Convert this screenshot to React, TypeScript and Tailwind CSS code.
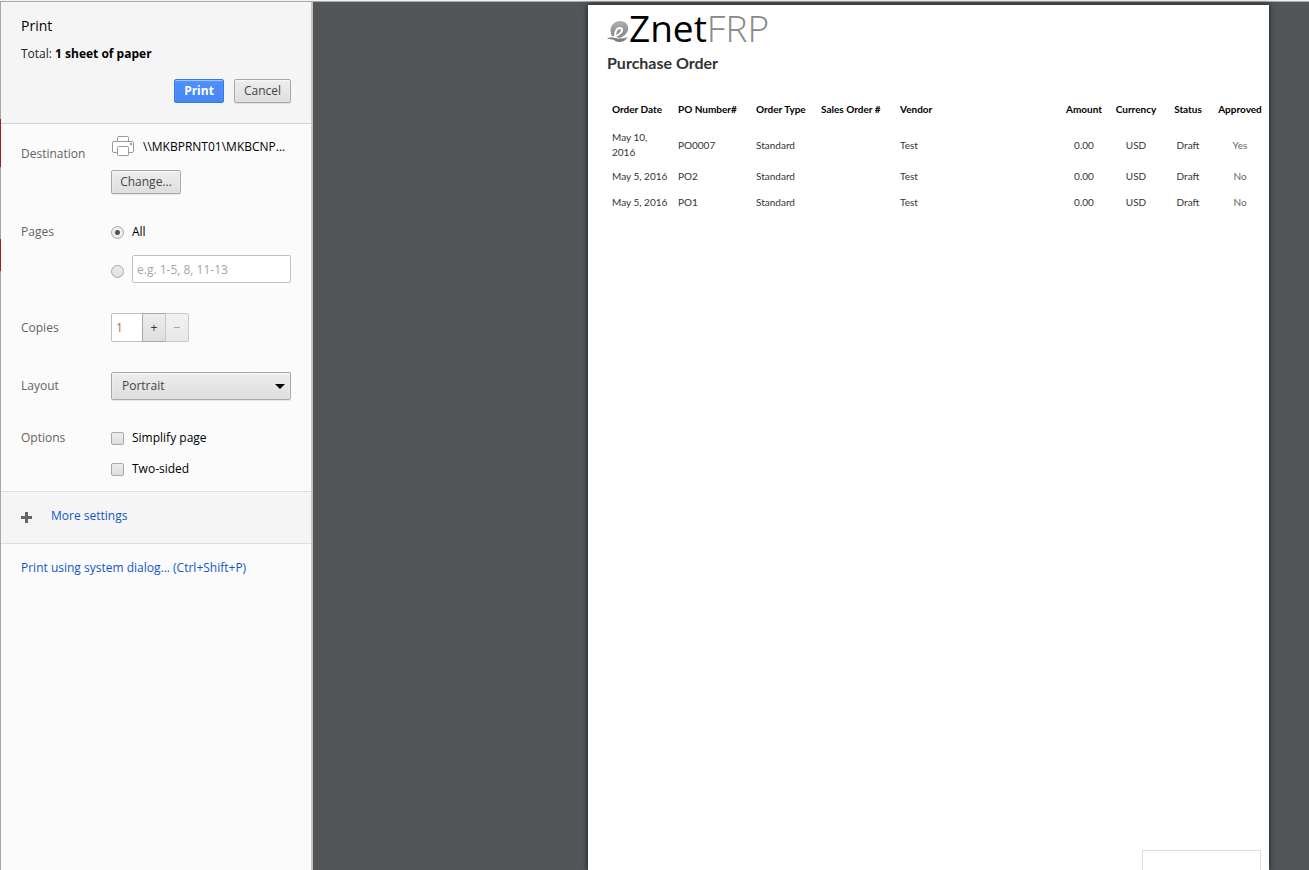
import type { ReactNode } from "react";

const buttonFace =
  "rounded-xs border border-[#a8a8a8] bg-linear-to-b from-[#ededed] to-[#dedede] text-[#444] shadow-[0_1px_0_rgba(0,0,0,0.08),inset_0_1px_2px_rgba(255,255,255,0.75)]";

const tick =
  "size-[13px] shrink-0 appearance-none border border-[#a8a8a8] bg-linear-to-b from-[#ededed] to-[#dedede]";

const orders = [
  { date: "May 10, 2016", po: "PO0007", approved: "Yes" },
  { date: "May 5, 2016", po: "PO2", approved: "No" },
  { date: "May 5, 2016", po: "PO1", approved: "No" },
];

function Row({ label, htmlFor, className, children }: { label: string; htmlFor?: string; className: string; children: ReactNode }) {
  return (
    <div className={`flex ${className}`}>
      <label htmlFor={htmlFor} className="w-[90px] shrink-0 text-[#646464]">
        {label}
      </label>
      <div className="min-w-0 flex-1">{children}</div>
    </div>
  );
}

function PrinterIcon() {
  return (
    <svg width="24" height="24" viewBox="0 0 24 24" className="shrink-0" fill="#fff" stroke="#999" aria-hidden="true">
      <path d="M6.5 7.500v-5a1 1 0 0 1 1-1h9a1 1 0 0 1 1 1v5" />
      <rect x="1.500" y="6.500" width="21" height="11" rx="1.500" />
      <path d="M6.500 12.500a1 1 0 0 1 1-1h9a1 1 0 0 1 1 1v7a1 1 0 0 1-1 1h-9a1 1 0 0 1-1-1z" />
      <path d="M19 9h2" strokeWidth="2" />
    </svg>
  );
}

function Settings() {
  return (
    <aside className="flex w-[312px] shrink-0 flex-col border-r-2 border-[#c4c4c4] bg-[#fbfbfb] text-xs leading-4 text-black">
      <header className="border-b border-[#d2d2d2] bg-[#f5f5f5] px-5 pt-4 pb-5">
        <h1 className="text-sm leading-4">Print</h1>
        <p className="mt-3 text-[#222]">
          Total: <strong className="font-bold text-black">1 sheet of paper</strong>
        </p>
        <div className="mt-[17px] flex justify-end gap-2.5">
          <button className="h-6 w-[50px] rounded-xs border border-[#3079ed] bg-linear-to-b from-[#4d90fe] to-[#4787ed] font-bold text-white shadow-[inset_0_1px_1px_rgba(255,255,255,0.5)]">
            Print
          </button>
          <button className={`h-6 w-[57px] ${buttonFace}`}>Cancel</button>
        </div>
      </header>

      <div className="px-5 pb-[14px]">
        <Row label="Destination" className="pt-[22px]">
          <div className="-mt-[11px] flex items-center gap-2">
            <PrinterIcon />
            <span className="whitespace-nowrap">\\MKBPRNT01\MKBCNP...</span>
          </div>
          <button className={`mt-[11px] h-6 w-[70px] ${buttonFace}`}>Change...</button>
        </Row>

        <Row label="Pages" className="pt-[30px]">
          <label className="flex items-center gap-2">
            <input type="radio" name="pages" defaultChecked className={`${tick} rounded-full checked:bg-[radial-gradient(circle,#555_2px,#eee_3px)]`} />
            All
          </label>
          <div className="mt-[15px] flex items-center gap-2">
            <input type="radio" name="pages" aria-label="Page range" className={`${tick} mt-1 rounded-full`} />
            <input
              type="text"
              aria-label="Pages to print"
              placeholder="e.g. 1-5, 8, 11-13"
              className="h-7 w-full min-w-0 rounded-xs border border-[#bfbfbf] bg-white px-1 placeholder:text-[#a5a5a5]"
            />
          </div>
        </Row>

        <Row label="Copies" htmlFor="copies" className="items-center pt-[30px]">
          <div className="flex">
            <input id="copies" type="text" defaultValue="1" className="h-[29px] w-8 rounded-l-xs border border-[#bfbfbf] bg-white px-1 text-[#a5703c]" />
            <button aria-label="More copies" className="-ml-px h-[29px] w-6 border border-[#a8a8a8] bg-linear-to-b from-[#ededed] to-[#dedede] text-[#333]">
              +
            </button>
            <button aria-label="Fewer copies" disabled className="-ml-px h-[29px] w-6 rounded-r-xs border border-[#c8c8c8] bg-linear-to-b from-[#f2f2f2] to-[#e8e8e8] text-[#999]">
              −
            </button>
          </div>
        </Row>

        <Row label="Layout" htmlFor="layout" className="items-center pt-[30px]">
          <div className="grid items-center">
            <select id="layout" className={`col-start-1 row-start-1 h-7 w-full appearance-none pl-2.5 ${buttonFace}`}>
              <option>Portrait</option>
              <option>Landscape</option>
            </select>
            <svg width="10" height="5" viewBox="0 0 10 5" className="pointer-events-none col-start-1 row-start-1 mr-1.5 justify-self-end" aria-hidden="true">
              <path d="M0 0h10L5 5z" />
            </svg>
          </div>
        </Row>

        <Row label="Options" className="pt-[30px]">
          <div className="flex flex-col gap-[15px]">
            <label className="flex items-center gap-2">
              <input type="checkbox" className={`${tick} rounded-xs`} />
              Simplify page
            </label>
            <label className="flex items-center gap-2">
              <input type="checkbox" className={`${tick} rounded-xs`} />
              Two-sided
            </label>
          </div>
        </Row>
      </div>

      <div className="flex items-center gap-[18px] border-y border-[#dedede] bg-[#f5f5f5] px-5 pt-4 pb-[19px]">
        <svg width="12" height="12" viewBox="0 0 12 12" fill="#666" className="mt-1" aria-hidden="true">
          <path d="M4 0h3v4h4v3H7v4H4V7H0V4h4z" />
        </svg>
        <a href="#more" className="text-[#15c]">
          More settings
        </a>
      </div>
      <a href="#system" className="px-5 py-4 text-[#15c]">
        Print using system dialog... (Ctrl+Shift+P)
      </a>
    </aside>
  );
}

function Logo() {
  return (
    <div className="flex h-[37px] items-start font-['Open_Sans',sans-serif] text-[37px] leading-[46px]">
      <svg width="24" height="26" viewBox="0 0 24 26" className="mt-3 -mr-0.5 shrink-0" aria-hidden="true">
        <defs>
          <linearGradient id="swirl" x1="0" y1="0" x2="0" y2="1">
            <stop offset="0" stopColor="#b0b0b0" />
            <stop offset="1" stopColor="#777" />
          </linearGradient>
        </defs>
        <path
          fill="url(#swirl)"
          d="M5 19C1 11 6 4 13 4c6 0 9 4 8 9-1 4-5 7-9 8 3 1 6 0 9-1-2 3-5 5-9 5-2 0-4-1-5-2-2-1-4-1-7-1 2-2 4-2 5-3z"
        />
        <path
          fill="#fff"
          d="M7 19c0-5 2-9 6-9 3 0 4 3 2 6-2 2-4 3-6 4 2 0 3 1 4 2-2 0-3-1-5-1-2-1-5-1-7 0 2-2 4-2 6-2zm2-1c2-1 5-3 5-5s-3-1-4 1z"
          fillRule="evenodd"
        />
      </svg>
      <span className="text-black">Znet</span>
      <span className="font-light text-[#888]">FRP</span>
    </div>
  );
}

function Preview() {
  return (
    <main className="flex min-w-0 flex-1 justify-end bg-[#525659] pt-[3px] pr-10">
      <article className="flex w-[681px] flex-col bg-white pr-[3px] pl-[19px] font-[Lato,sans-serif] text-[10px] leading-[15px] text-[#333] shadow-[0_0_6px_rgba(0,0,0,0.7)]">
        <Logo />
        <h2 className="mt-[11px] text-base leading-5 font-bold">Purchase Order</h2>
        <table className="mt-[18px] w-full table-fixed text-left">
          <colgroup>
            <col className="w-[66px]" />
            <col className="w-[78px]" />
            <col className="w-[65px]" />
            <col className="w-[79px]" />
            <col />
            <col className="w-[52px]" />
            <col className="w-[52px]" />
            <col className="w-[52px]" />
            <col className="w-[52px]" />
          </colgroup>
          <thead>
            <tr className="h-9 whitespace-nowrap text-black">
              <th className="px-[5px]">Order Date</th>
              <th className="px-[5px]">PO Number#</th>
              <th className="px-[5px]">Order Type</th>
              <th className="px-[5px]">Sales Order #</th>
              <th className="px-[5px]">Vendor</th>
              <th className="px-1 text-center">Amount</th>
              <th className="px-1 text-center">Currency</th>
              <th className="px-1 text-center">Status</th>
              <th className="px-1 text-center">Approved</th>
            </tr>
          </thead>
          <tbody>
            {orders.map((o) => (
              <tr key={o.po} className="h-[26px]">
                <td className="px-[5px] py-[3px]">{o.date}</td>
                <td className="px-[5px] py-[3px]">{o.po}</td>
                <td className="px-[5px] py-[3px]">Standard</td>
                <td />
                <td className="px-[5px] py-[3px]">Test</td>
                <td className="text-center">0.00</td>
                <td className="text-center">USD</td>
                <td className="text-center">Draft</td>
                <td className="text-center text-[#666]">{o.approved}</td>
              </tr>
            ))}
          </tbody>
        </table>
        <div className="mt-auto mr-[5px] h-5 w-[119px] self-end border border-b-0 border-[#ddd]" />
      </article>
    </main>
  );
}

export default function App() {
  return (
    <div className="flex min-h-screen flex-col overflow-hidden bg-[#f2f2f2] font-['Open_Sans','Noto_Sans',sans-serif]">
      <div className="h-0.5 border-b border-[#a8a8a8]" />
      <div className="flex flex-1">
        <div className="flex w-px flex-col bg-[#a8a8a8]">
          <div className="mt-[117px] h-12 bg-[#a02020]" />
          <div className="mt-[72px] h-8 bg-[#a02020]" />
        </div>
        <Settings />
        <Preview />
      </div>
    </div>
  );
}
